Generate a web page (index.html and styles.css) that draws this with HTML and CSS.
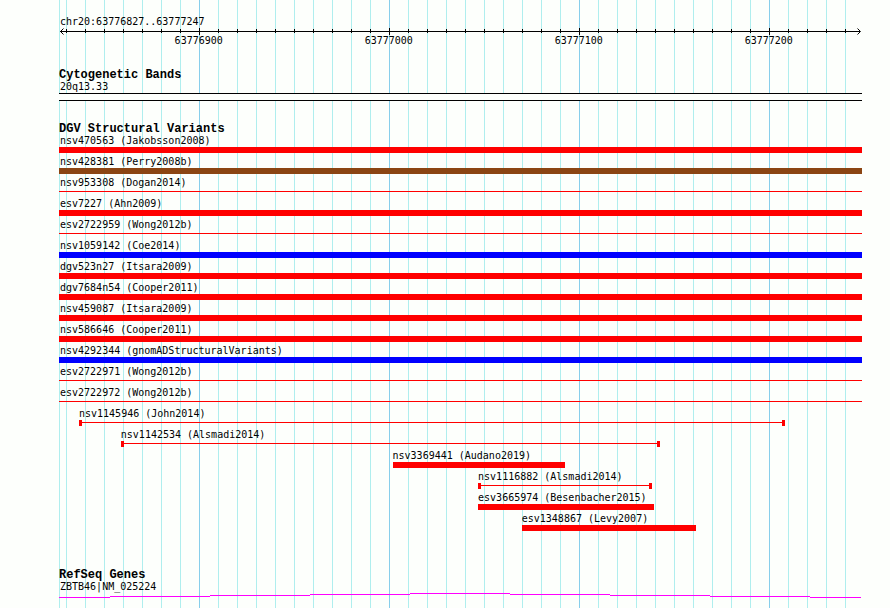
FILE: index.html
```
<!DOCTYPE html>
<html lang="en">
<head>
    <meta charset="UTF-8">
    <meta name="viewport" content="width=device-width, initial-scale=1.0">
    <title>chr20:63776827..63777247</title>
    <link rel="stylesheet" href="styles.css">
</head>
<body>
    <main class="browser">
        <div class="grid" id="grid"></div>

        <section class="track ruler">
            <div class="label">chr20:63776827..63777247</div>
            <div class="axis" id="axis">
                <svg class="arrow arrow-left" width="4" height="7" viewBox="0 0 4 7"><path d="M3.5 0.5 L0.5 3.5 L3.5 6.5"/></svg>
                <svg class="arrow arrow-right" width="4" height="7" viewBox="0 0 4 7"><path d="M0.5 0.5 L3.5 3.5 L0.5 6.5"/></svg>
            </div>
        </section>

        <section class="track cytobands">
            <h2>Cytogenetic Bands</h2>
            <div class="label">20q13.33</div>
            <div class="band"></div>
        </section>

        <section class="track variants">
            <h2>DGV Structural Variants</h2>
            <div id="variants"></div>
        </section>

        <section class="track genes">
            <h2>RefSeq Genes</h2>
            <div class="label">ZBTB46|NM_025224</div>
            <svg class="intron" viewBox="0 0 802 5" preserveAspectRatio="none">
                <path d="M0 4h51v1h-51z M51 3h100v1h-100z M151 2h100v1h-100z M251 1h100v1h-100z M351 0h100v1h-100z M451 1h100v1h-100z M551 2h100v1h-100z M651 3h100v1h-100z M751 4h51v1h-51z"/>
            </svg>
        </section>
    </main>

    <script src="script.js"></script>
</body>
</html>
```
FILE: styles.css
```
body {
    margin: 0;
    background: #fdfffc;
    color: #000;
    font-family: "DejaVu Sans Mono", "Liberation Mono", monospace;
    font-size: 10px;
    line-height: 13px;
}
.browser {
    position: relative;
    box-sizing: border-box;
    min-height: 100vh;
    margin: 0 30px 0 60px;
    padding-top: 15px;
}
.track {
    position: relative;
}
h2 {
    height: 12px;
    margin: 0 -1px;
    padding-top: 1px;
    font-family: "Liberation Mono", monospace;
    font-size: 12px;
    line-height: 14px;
    font-weight: bold;
}
.label {
    white-space: nowrap;
}

/* vertical guide lines behind the tracks */
.grid {
    position: absolute;
    top: 0;
    bottom: 0;
    left: 0;
    right: 0;
}
.grid-line {
    position: absolute;
    top: 0;
    bottom: 0;
    width: 1px;
    background: #afeeee;
}
.grid-line.major {
    background: #87ceeb;
}
.grid-line.edge {
    left: -1px;
}

/* ruler */
.axis {
    position: relative;
    height: 20px;
}
.axis::before {
    content: "";
    position: absolute;
    top: 3px;
    left: 0;
    right: 0;
    height: 1px;
    background: #000;
}
.tick {
    position: absolute;
    top: 1px;
    width: 1px;
    height: 4px;
    background: #000;
}
.tick.major {
    top: 0;
    height: 7px;
}
.tick-label {
    position: absolute;
    top: 6px;
    transform: translateX(-50%);
}
.arrow {
    position: absolute;
    top: 0;
    fill: none;
    stroke: #000;
}
.arrow-left {
    left: 0;
}
.arrow-right {
    right: -1px;
}

.cytobands {
    margin-top: 19px;
}
.band {
    height: 6px;
    margin: 0 -2px 0 -1px;
    border-top: 1px solid #000;
    border-bottom: 1px solid #000;
    background: #fdfffc;
}

/* variants */
.variants {
    margin-top: 20px;
}
.variant {
    height: 21px;
}
.bar {
    height: 6px;
    margin-right: -1px;
    background: #f00;
}
.bar.gain {
    background: #00f;
}
.bar.both {
    background: #8b4513;
}
.bar.thin {
    background: linear-gradient(#f00, #f00) 0 2px / 100% 1px no-repeat;
}
.bar.capped {
    box-sizing: border-box;
    border: solid #f00;
    border-width: 0 3px;
}
.bar.full {
    margin: 0 -2px 0 -1px;
}

/* genes */
.genes {
    margin-top: 34px;
}
.intron {
    display: block;
    width: calc(100% + 2px);
    height: 5px;
    margin-left: -1px;
    fill: #f0f;
    shape-rendering: crispEdges;
}
```
FILE: script.js
```
const regionStart = 63776827;
const regionEnd = 63777247;
const regionLength = regionEnd - regionStart + 1;

// variants without start/end run across the whole region
const variants = [
    { name: "nsv470563 (Jakobsson2008)", type: "loss" },
    { name: "nsv428381 (Perry2008b)", type: "both" },
    { name: "nsv953308 (Dogan2014)", type: "thin" },
    { name: "esv7227 (Ahn2009)", type: "loss" },
    { name: "esv2722959 (Wong2012b)", type: "thin" },
    { name: "nsv1059142 (Coe2014)", type: "gain" },
    { name: "dgv523n27 (Itsara2009)", type: "loss" },
    { name: "dgv7684n54 (Cooper2011)", type: "loss" },
    { name: "nsv459087 (Itsara2009)", type: "loss" },
    { name: "nsv586646 (Cooper2011)", type: "loss" },
    { name: "nsv4292344 (gnomADStructuralVariants)", type: "gain" },
    { name: "esv2722971 (Wong2012b)", type: "thin" },
    { name: "esv2722972 (Wong2012b)", type: "thin" },
    { name: "nsv1145946 (John2014)", type: "thin capped", start: 63776837, end: 63777208 },
    { name: "nsv1142534 (Alsmadi2014)", type: "thin capped", start: 63776859, end: 63777142 },
    { name: "nsv3369441 (Audano2019)", type: "loss", start: 63777002, end: 63777092 },
    { name: "nsv1116882 (Alsmadi2014)", type: "thin capped", start: 63777047, end: 63777138 },
    { name: "esv3665974 (Besenbacher2015)", type: "loss", start: 63777047, end: 63777139 },
    { name: "esv1348867 (Levy2007)", type: "loss", start: 63777070, end: 63777161 }
];

function percent(bases) {
    return (bases / regionLength * 100) + "%";
}

function addDiv(parent, className, left) {
    const div = document.createElement("div");
    div.className = className;
    if (left !== undefined) {
        div.style.left = left;
    }
    parent.appendChild(div);
    return div;
}

function drawRuler() {
    const grid = document.getElementById("grid");
    const axis = document.getElementById("axis");
    addDiv(grid, "grid-line edge");
    for (let pos = Math.ceil(regionStart / 10) * 10; pos <= regionEnd; pos += 10) {
        const left = percent(pos - regionStart);
        const major = pos % 100 === 0 ? " major" : "";
        addDiv(grid, "grid-line" + major, left);
        addDiv(axis, "tick" + major, left);
        if (major) {
            addDiv(axis, "tick-label", left).textContent = pos;
        }
    }
}

function drawVariants() {
    const list = document.getElementById("variants");
    variants.forEach(variant => {
        const row = addDiv(list, "variant");
        addDiv(row, "label").textContent = variant.name;
        const bar = addDiv(row, "bar " + variant.type);
        if (variant.start) {
            row.style.marginLeft = percent(variant.start - regionStart);
            row.style.width = percent(variant.end - variant.start);
        } else {
            bar.classList.add("full");
        }
    });
}

drawRuler();
drawVariants();
```
